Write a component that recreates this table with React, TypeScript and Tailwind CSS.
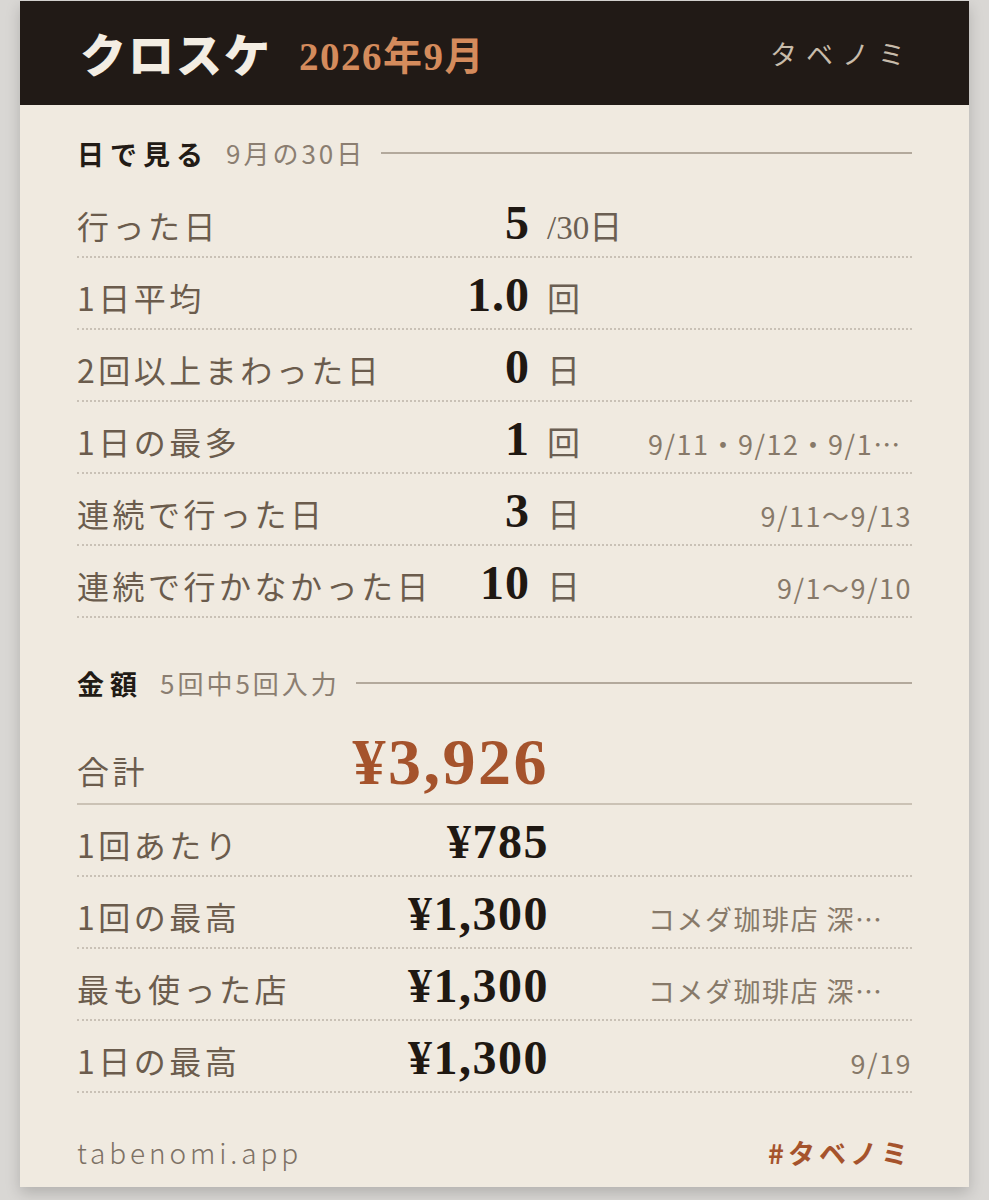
import React from "react";

const SANS = "font-['Noto_Sans_CJK_JP','Noto_Sans',sans-serif]";
const SERIF = "font-['Liberation_Serif','Noto_Sans_CJK_JP',serif]";

type DayRow = { label: string; value: string; unit: string; note?: string; clip?: boolean };
type MoneyRow = { label: string; value: string; note?: string; clip?: boolean };

const DAY_ROWS: DayRow[] = [
  { label: "行った日", value: "5", unit: "/30日" },
  { label: "1日平均", value: "1.0", unit: "回" },
  { label: "2回以上まわった日", value: "0", unit: "日" },
  { label: "1日の最多", value: "1", unit: "回", note: "9/11・9/12・9/1…", clip: true },
  { label: "連続で行った日", value: "3", unit: "日", note: "9/11～9/13" },
  { label: "連続で行かなかった日", value: "10", unit: "日", note: "9/1～9/10" },
];

const MONEY_ROWS: MoneyRow[] = [
  { label: "1回あたり", value: "¥785" },
  { label: "1回の最高", value: "¥1,300", note: "コメダ珈琲店 深…", clip: true },
  { label: "最も使った店", value: "¥1,300", note: "コメダ珈琲店 深…", clip: true },
  { label: "1日の最高", value: "¥1,300", note: "9/19" },
];

function SectionHead({ title, sub }: { title: string; sub: string }) {
  return (
    <div className="flex items-center h-[32px]">
      <span className={`${SANS} text-[27px] font-bold tracking-[6px] text-[#221b16] leading-none`}>{title}</span>
      <span className={`${SANS} text-[26px] tracking-[3px] text-[#8b7e71] leading-none ml-[17px]`}>{sub}</span>
      <div className="flex-1 h-[2px] bg-[#b3a99c] ml-[16px]" />
    </div>
  );
}

function Note({ text, clip }: { text?: string; clip?: boolean }) {
  return (
    <span
      className={`${SANS} w-[264px] ml-auto shrink-0 whitespace-nowrap text-[27px] tracking-[1.5px] text-[#877969] leading-none ${
        clip ? "text-left" : "text-right"
      }`}
    >
      {text}
    </span>
  );
}

export default function App() {
  return (
    <div className="min-h-[1200px] bg-[#d9d7d4] px-[20px] pt-px">
      <div className="bg-[#f0eae0] shadow-[0_6px_14px_rgba(0,0,0,0.18)]">
        {/* ヘッダー */}
        <div className="h-[104px] bg-[#211a16] flex items-center justify-between pl-[60px] pr-[55px]">
          <div className="flex items-baseline">
            <span className={`${SANS} text-[46px] font-black tracking-[2px] text-[#f3ede3] leading-none`}>クロスケ</span>
            <span className={`${SERIF} text-[39px] font-bold tracking-[1.5px] text-[#d48b5c] leading-none ml-[27px] -translate-y-[2px]`}>2026年9月</span>
          </div>
          <span className={`${SANS} text-[27px] tracking-[9px] text-[#c8bcab] leading-none`}>タベノミ</span>
        </div>

        <div className="px-[57px] pt-[32px]">
          <SectionHead title="日で見る" sub="9月の30日" />
          <div className="mt-[17px]">
            {DAY_ROWS.map((r) => (
              <div key={r.label} className="flex items-baseline h-[72px] pt-[13px] border-b-2 border-dotted border-[#c9c1b6]">
                <span className={`${SANS} w-[360px] shrink-0 text-[32px] tracking-[3.5px] text-[#6b5c4d] leading-none`}>{r.label}</span>
                <span className={`${SERIF} w-[93px] shrink-0 text-right text-[48px] font-bold tracking-[1px] text-[#1f1812] leading-none`}>{r.value}</span>
                <span className={`${SERIF} w-[118px] shrink-0 pl-[17px] text-[33px] text-[#6b5f53] leading-none`}>{r.unit}</span>
                <Note text={r.note} clip={r.clip} />
              </div>
            ))}
          </div>

          <div className="mt-[49px]">
            <SectionHead title="金額" sub="5回中5回入力" />
          </div>
          <div className="flex items-baseline h-[106px] pt-[30px] border-b-2 border-[#cbc2b5]">
            <span className={`${SANS} w-[260px] shrink-0 text-[32px] tracking-[3.5px] text-[#6b5c4d] leading-none`}>合計</span>
            <span className={`${SERIF} w-[212px] shrink-0 text-right text-[66px] font-bold tracking-[2.5px] text-[#a5532c] leading-none`}>¥3,926</span>
          </div>
          {MONEY_ROWS.map((r) => (
            <div key={r.label} className="flex items-baseline h-[72px] pt-[13px] border-b-2 border-dotted border-[#c9c1b6]">
              <span className={`${SANS} w-[260px] shrink-0 text-[32px] tracking-[3.5px] text-[#6b5c4d] leading-none`}>{r.label}</span>
              <span className={`${SERIF} w-[212px] shrink-0 text-right text-[48px] font-bold tracking-[1.5px] text-[#1f1812] leading-none`}>{r.value}</span>
              <Note text={r.note} clip={r.clip} />
            </div>
          ))}

          <div className="flex items-center justify-between h-[32px] mt-[43px] pb-[19px] box-content">
            <span className={`${SANS} text-[28px] font-light tracking-[3.9px] text-[#7d7165] leading-none`}>tabenomi.app</span>
            <span className={`${SANS} text-[27px] font-bold tracking-[4px] text-[#a5532c] leading-none`}>#タベノミ</span>
          </div>
        </div>
      </div>
    </div>
  );
}
